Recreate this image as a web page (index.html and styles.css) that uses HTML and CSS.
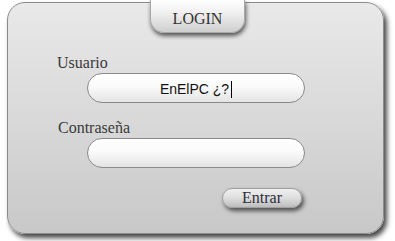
FILE: index.html
```html
<!DOCTYPE html>
<html lang="es">
<head>
<meta charset="utf-8">
<title>Login</title>
<link rel="stylesheet" href="styles.css">
</head>
<body>
<div class="panel">
  <div class="tab">LOGIN</div>
  <div class="label label-user">Usuario</div>
  <div class="field"><span class="value">EnElPC ¿?</span><span class="caret"></span></div>
  <div class="label label-pass">Contraseña</div>
  <div class="field field-pass"></div>
  <div class="button">Entrar</div>
</div>
</body>
</html>
```

FILE: styles.css
```css
html, body {
  margin: 0;
  padding: 0;
  background: #ffffff;
}

body {
  width: 395px;
  height: 241px;
  overflow: hidden;
  font-family: "Liberation Serif", "Times New Roman", serif;
}

.panel {
  box-sizing: border-box;
  margin: 2px 0 0 7px;
  width: 377px;
  height: 232px;
  border: 1px solid #8c8c8c;
  border-radius: 18px;
  background: linear-gradient(to bottom, #e9e9e9 0%, #d9d9d9 50%, #c8c8c8 100%);
  box-shadow: 3px 4px 5px rgba(40, 40, 40, 0.85);
  display: flex;
  flex-direction: column;
  align-items: flex-start;
}

.tab {
  box-sizing: border-box;
  margin: -3px 0 0 142px;
  width: 95px;
  height: 33px;
  border-radius: 0 0 14px 14px;
  border: 1px solid #a8a8a8;
  border-top: none;
  background: linear-gradient(to bottom, #ffffff 0%, #f2f2f2 35%, #cfcfcf 100%);
  box-shadow: 1px 3px 4px rgba(40, 40, 40, 0.75);
  color: #333333;
  font-size: 16px;
  line-height: 18px;
  padding-top: 10px;
  text-align: center;
}

.label {
  color: #3a3a3a;
  font-size: 16px;
  line-height: 18px;
}

.label-user {
  margin: 21px 0 0 49px;
}

.label-pass {
  margin: 16px 0 0 50px;
}

.field {
  box-sizing: border-box;
  margin: 1px 0 0 79px;
  width: 218px;
  height: 30px;
  border: 1px solid #8a8a8a;
  border-radius: 15px;
  background: linear-gradient(to bottom, #ffffff 0%, #fafafa 45%, #e4e4e4 100%);
  display: flex;
  justify-content: center;
  align-items: center;
  padding-top: 2px;
}

.value {
  font-family: "Liberation Sans", Arial, sans-serif;
  font-size: 14px;
  line-height: 16px;
  color: #111111;
}

.caret {
  display: inline-block;
  width: 1px;
  height: 17px;
  margin-left: 2px;
  background: #000000;
}

.button {
  box-sizing: border-box;
  margin: 20px 0 0 214px;
  width: 80px;
  height: 20px;
  border-radius: 10px;
  border: 1px solid #a0a0a0;
  background: linear-gradient(to bottom, #f0f0f0 0%, #dedede 50%, #bdbdbd 100%);
  box-shadow: 2px 3px 4px rgba(40, 40, 40, 0.75);
  color: #2f2f3a;
  font-size: 16px;
  line-height: 18px;
  text-align: center;
}
```
